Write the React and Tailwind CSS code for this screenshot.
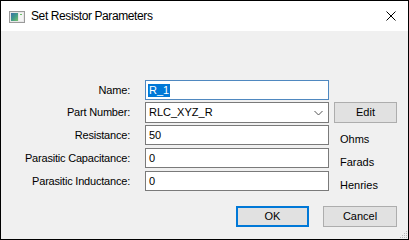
import React from "react";

function Field({ label, value, unit, selected, focused }) {
  return (
    <div className="flex items-center h-[20px]">
      <div className="w-[129px] text-right text-[11px] leading-none text-black tracking-[-0.2px]">{label}</div>
      <div
        className={`ml-[15px] w-[184px] h-[20px] bg-white border flex items-center pl-[2px] text-[11px] ${
          focused ? "border-[#4f88c0]" : "border-[#7a7a7a]"
        }`}
      >
        {selected ? (
          <span className="bg-[#0078d7] text-white px-[1px] leading-[13px]">{value}</span>
        ) : (
          <span className="pl-[1px] leading-none">{value}</span>
        )}
      </div>
      {unit && (
        <div className="ml-[11px] text-[11px] leading-none mt-[8px]">{unit}</div>
      )}
    </div>
  );
}

export default function App() {
  return (
    <div
      className="w-[409px] h-[240px] border border-black flex flex-col bg-[#f0f0f0] select-none"
      style={{ fontFamily: '"Liberation Sans", Arial, sans-serif' }}
    >
      {/* Title bar */}
      <div className="h-[30px] bg-white flex items-center shrink-0">
        <svg width="16" height="12" viewBox="0 0 16 12" className="ml-[8px] mt-[1px]">
          <defs>
            <linearGradient id="g1" x1="0" y1="0" x2="1" y2="1">
              <stop offset="0" stopColor="#3a6fa8" />
              <stop offset="0.5" stopColor="#3f9a8a" />
              <stop offset="1" stopColor="#7cc26a" />
            </linearGradient>
          </defs>
          <rect x="0.5" y="0.5" width="15" height="11" fill="#e8e8e8" stroke="#9a9a9a" />
          <rect x="2" y="2" width="7" height="8" fill="url(#g1)" />
          <rect x="10" y="2" width="4" height="8" fill="#f4f4f4" />
          <rect x="11" y="3" width="2" height="1" fill="#6fbf6a" />
        </svg>
        <span className="ml-[6px] text-[12px] text-black tracking-[-0.4px]">Set Resistor Parameters</span>
        <div className="flex-1" />
        <svg width="10" height="10" viewBox="0 0 10 10" className="mr-[12px]">
          <path d="M0.5 0.5 L9.5 9.5 M9.5 0.5 L0.5 9.5" stroke="#000" strokeWidth="1" />
        </svg>
      </div>

      {/* Content */}
      <div className="flex-1 relative flex flex-col pt-[49px]">
        <Field label="Name:" value="R_1" selected focused />
        <div className="flex items-center h-[21px] mt-[2px]">
          <div className="w-[129px] text-right text-[11px] leading-none tracking-[-0.2px]">Part Number:</div>
          <div className="ml-[15px] w-[184px] h-[21px] bg-white border border-[#7a7a7a] flex items-center pl-[3px] text-[11px]">
            <span className="flex-1 leading-none">RLC_XYZ_R</span>
            <svg width="9" height="6" viewBox="0 0 9 6" className="mr-[5px] mt-[1px]">
              <path d="M0.5 1 L4.5 5 L8.5 1" stroke="#555" fill="none" strokeWidth="1" />
            </svg>
          </div>
          <div className="ml-[5px] w-[63px] h-[21px] bg-[#e1e1e1] border border-[#adadad] flex items-center justify-center text-[11px]">
            Edit
          </div>
        </div>
        <div className="mt-[2px]">
          <Field label="Resistance:" value="50" unit="Ohms" />
        </div>
        <div className="mt-[3px]">
          <Field label="Parasitic Capacitance:" value="0" unit="Farads" />
        </div>
        <div className="mt-[3px]">
          <Field label="Parasitic Inductance:" value="0" unit="Henries" />
        </div>

        <div className="flex justify-end mt-[15px] pr-[11px] gap-[14px]">
          <div className="w-[73px] h-[21px] bg-[#e1e1e1] border-2 border-[#0078d7] flex items-center justify-center text-[11px]">
            OK
          </div>
          <div className="w-[74px] h-[21px] bg-[#e1e1e1] border border-[#adadad] flex items-center justify-center text-[11px]">
            Cancel
          </div>
        </div>

        <svg width="10" height="10" viewBox="0 0 10 10" className="absolute right-0 bottom-0">
          <rect x="8" y="2" width="1" height="1" fill="#b8b8b8" />
          <rect x="6" y="4" width="1" height="1" fill="#b8b8b8" />
          <rect x="8" y="4" width="1" height="1" fill="#b8b8b8" />
          <rect x="4" y="6" width="1" height="1" fill="#b8b8b8" />
          <rect x="6" y="6" width="1" height="1" fill="#b8b8b8" />
          <rect x="8" y="6" width="1" height="1" fill="#b8b8b8" />
          <rect x="2" y="8" width="1" height="1" fill="#b8b8b8" />
          <rect x="4" y="8" width="1" height="1" fill="#b8b8b8" />
          <rect x="6" y="8" width="1" height="1" fill="#b8b8b8" />
          <rect x="8" y="8" width="1" height="1" fill="#b8b8b8" />
        </svg>
      </div>
    </div>
  );
}
